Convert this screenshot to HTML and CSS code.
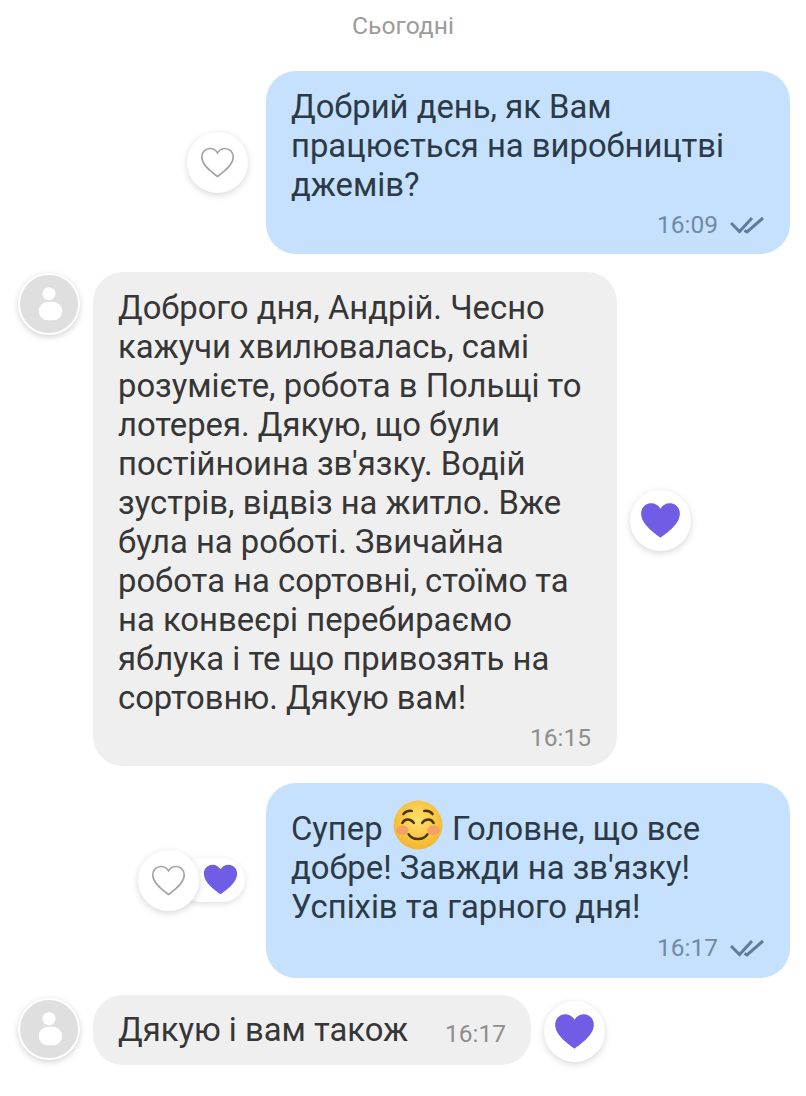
FILE: index.html
```html
<!DOCTYPE html>
<html lang="uk">
<head>
<meta charset="utf-8">
<title>Чат</title>
<link rel="stylesheet" href="styles.css">
</head>
<body>
<svg class="defs" width="0" height="0" aria-hidden="true">
  <defs>
    <path id="heart" d="M12 21.6C8.6 19 1.2 14.2 1.2 8.1 1.2 4.8 3.8 2.4 6.8 2.4c2.2 0 4.1 1.1 5.2 3 1.1-1.9 3-3 5.2-3 3 0 5.6 2.4 5.6 5.7 0 6.1-7.4 10.900-10.800 13.500z"/>
  </defs>
</svg>
<main class="chat">
  <div class="date">Сьогодні</div>

  <div class="row row-out first">
    <button class="react"><svg class="hollow" viewBox="0 0 24 24"><use href="#heart"/></svg></button>
    <div class="bubble out">
      <p class="text">Добрий день, як Вам<br>працюється на виробництві<br>джемів?</p>
      <div class="meta">
        <span class="time">16:09</span>
        <svg class="ticks" viewBox="0 0 34 20"><path d="M1 8l8.500 8.500L22 3M14.500 15.500L17 17 33 3"/></svg>
      </div>
    </div>
  </div>

  <div class="row row-in second">
    <div class="avatar"><svg viewBox="0 0 62 62"><circle cx="31" cy="20" r="7"/><rect x="20" y="28.500" width="25" height="20" rx="10"/></svg></div>
    <div class="bubble in">
      <p class="text">Доброго дня, Андрій. Чесно<br>кажучи хвилювалась, самі<br>розумієте, робота в Польщі то<br>лотерея. Дякую, що були<br>постійноина зв'язку. Водій<br>зустрів, відвіз на житло. Вже<br>була на роботі. Звичайна<br>робота на сортовні, стоїмо та<br>на конвеєрі перебираємо<br>яблука і те що привозять на<br>сортовню. Дякую вам!</p>
      <div class="meta"><span class="time">16:15</span></div>
    </div>
    <button class="react self-center"><svg class="solid" viewBox="0 0 24 24"><use href="#heart"/></svg></button>
  </div>

  <div class="row row-out third">
    <div class="react-pair">
      <span class="pill"><svg class="solid small" viewBox="0 0 24 24"><use href="#heart"/></svg></span>
      <button class="react"><svg class="hollow" viewBox="0 0 24 24"><use href="#heart"/></svg></button>
    </div>
    <div class="bubble out">
      <p class="text">Супер <svg class="emoji" viewBox="0 0 48 48">
        <defs><radialGradient id="face" cx="50%" cy="40%" r="60%"><stop offset="0" stop-color="#fde36b"/><stop offset="1" stop-color="#f5b52e"/></radialGradient></defs>
        <circle cx="24" cy="24" r="23.500" fill="url(#face)"/>
        <ellipse cx="9" cy="29" rx="6" ry="4.500" fill="#f3a06a"/>
        <ellipse cx="39" cy="29" rx="6" ry="4.500" fill="#f3a06a"/>
        <path class="emoji-line" d="M9 22c2-4.500 8-4.500 11 0M28 22c3-4.500 9-4.500 11 0M10 13.500c2-2.500 5-3.500 8-3M30 10.500c3-.5 6 .5 8 3M15 33c4 6 14 6 18 0"/>
      </svg> Головне, що все<br>добре! Завжди на зв'язку!<br>Успіхів та гарного дня!</p>
      <div class="meta">
        <span class="time">16:17</span>
        <svg class="ticks" viewBox="0 0 34 20"><path d="M1 8l8.500 8.500L22 3M14.500 15.500L17 17 33 3"/></svg>
      </div>
    </div>
  </div>

  <div class="row row-in fourth">
    <div class="avatar"><svg viewBox="0 0 62 62"><circle cx="31" cy="20" r="7"/><rect x="20" y="28.500" width="25" height="20" rx="10"/></svg></div>
    <div class="bubble in short">
      <p class="text">Дякую і вам також</p>
      <span class="time">16:17</span>
    </div>
    <button class="react"><svg class="solid" viewBox="0 0 24 24"><use href="#heart"/></svg></button>
  </div>
</main>
</body>
</html>
```

FILE: styles.css
```css
* { box-sizing: border-box; }
html, body { margin: 0; padding: 0; background: #fff; }
body { width: 806px; height: 1096px; overflow: hidden; font-family: Roboto, "Noto Sans", sans-serif; }
.defs { position: absolute; }
.chat { display: flex; flex-direction: column; }
.date { height: 51px; padding-top: 12px; text-align: center; font-size: 24.700px; line-height: 28px; color: #9c9c9c; }
.row { display: flex; }
.row-out { justify-content: flex-end; align-items: center; gap: 18px; padding-right: 16px; }
.row-in { align-items: flex-start; padding-left: 18px; gap: 13px; }
.first { margin-top: 20px; }
.second { margin-top: 18px; }
.third { margin-top: 17px; }
.fourth { margin-top: 17px; }
.bubble { border-radius: 30px; padding: 17px 26px 0 25px; }
.out { width: 524px; background: #c5e1fd; color: #2c3a47; }
.in { width: 524px; background: #efefef; color: #363636; }
.first .bubble { height: 183px; }
.second .bubble { height: 494px; }
.third .bubble { height: 195px; padding-top: 27px; }
.third .meta { margin-top: 1px; }
.text { margin: 0; font-size: 32.800px; line-height: 39px; white-space: nowrap; }
.meta { display: flex; justify-content: flex-end; align-items: center; gap: 12px; height: 39px; }
.time { font-size: 24.500px; line-height: 28px; color: #6f8ba6; }
.in .time { color: #8e8e8e; }
.ticks { width: 34px; height: 20px; fill: none; stroke: #5f7d99; stroke-width: 3; }
.react { flex: none; width: 61px; height: 61px; padding: 0; border: 0; border-radius: 50%; background: #fff; box-shadow: 0 2px 7px rgba(0, 0, 0, .16); display: flex; align-items: center; justify-content: center; }
.first .react { margin-top: -1px; }
.self-center { align-self: center; margin-top: 2px; }
.hollow { width: 35px; height: 35px; fill: none; stroke: #a3a3a3; stroke-width: 1.100; }
.solid { width: 43px; height: 43px; fill: #6f5de6; stroke: none; }
.small { width: 37px; height: 37px; }
.avatar { flex: none; width: 62px; height: 62px; margin-top: 1px; border-radius: 50%; background: #dfdfdf; border: 2px solid #fff; box-shadow: 0 2px 6px rgba(0, 0, 0, .18); }
.avatar svg { display: block; width: 100%; height: 100%; fill: #fff; margin: 0; }
.react-pair { position: relative; width: 107px; height: 61px; margin-right: 3px; margin-top: -1px; }
.react-pair .react { position: absolute; left: 0; top: 0; }
.pill { position: absolute; left: 40px; top: 8px; width: 67px; height: 44px; border-radius: 22px; background: #fff; box-shadow: 0 2px 6px rgba(0, 0, 0, .13); display: flex; align-items: center; justify-content: flex-end; padding-right: 6px; }
.emoji { width: 50px; height: 50px; vertical-align: 4px; margin: -14px 1px -14px 2px; }
.emoji-line { fill: none; stroke: #4a3411; stroke-width: 2.400; stroke-linecap: round; }
.short { width: 438px; height: 70px; padding: 16px 25px 0 25px; display: flex; justify-content: space-between; align-items: flex-start; }
.short .time { padding-top: 9px; }
.fourth .react { margin-top: 6px; }
.fourth .avatar { margin-top: 3px; }
```
